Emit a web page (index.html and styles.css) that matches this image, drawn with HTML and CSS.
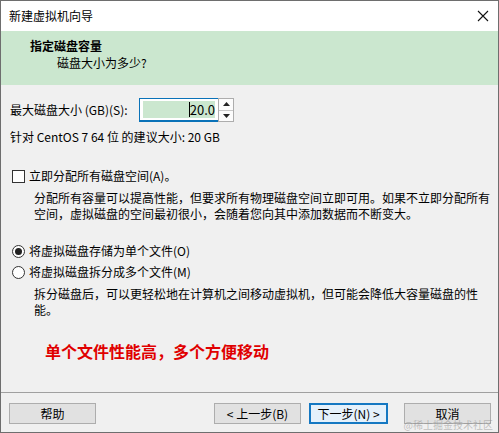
FILE: index.html
```html
<!DOCTYPE html>
<html lang="zh-CN">
<head>
<meta charset="utf-8">
<title>新建虚拟机向导</title>
<link rel="stylesheet" href="styles.css">
</head>
<body>
<div class="window">
  <div class="titlebar">
    <span class="title">新建虚拟机向导</span>
    <svg class="close" width="12" height="12" viewBox="0 0 12 12"><path d="M1 1 L11 11 M11 1 L1 11" stroke="#111" stroke-width="1.1" fill="none"/></svg>
  </div>
  <div class="header">
    <div class="h-title">指定磁盘容量</div>
    <div class="h-sub">磁盘大小为多少?</div>
  </div>
  <div class="content">
    <div class="size-row">
      <span class="label">最大磁盘大小 (GB)(S):</span>
      <div class="spin">
        <div class="spin-input"><span class="caret"></span>20.0</div>
        <div class="spin-btns">
          <div class="spin-btn"><svg width="7" height="4" viewBox="0 0 7 4"><path d="M0 4 L3.5 0 L7 4 Z" fill="#222"/></svg></div>
          <div class="spin-btn"><svg width="7" height="4" viewBox="0 0 7 4"><path d="M0 0 L3.5 4 L7 0 Z" fill="#222"/></svg></div>
        </div>
      </div>
    </div>
    <div class="recommend">针对 CentOS 7 64 位 的建议大小: 20 GB</div>
    <div class="check-row"><span class="checkbox"></span><span>立即分配所有磁盘空间(A)。</span></div>
    <p class="desc">分配所有容量可以提高性能，但要求所有物理磁盘空间立即可用。如果不立即分配所有空间，虚拟磁盘的空间最初很小，会随着您向其中添加数据而不断变大。</p>
    <div class="radio-row first"><span class="radio checked"></span><span>将虚拟磁盘存储为单个文件(O)</span></div>
    <div class="radio-row second"><span class="radio"></span><span>将虚拟磁盘拆分成多个文件(M)</span></div>
    <p class="desc">拆分磁盘后，可以更轻松地在计算机之间移动虚拟机，但可能会降低大容量磁盘的性能。</p>
    <div class="note">单个文件性能高，多个方便移动</div>
  </div>
  <div class="footer">
    <button class="btn help">帮助</button>
    <div class="nav">
      <button class="btn">&lt; 上一步(B)</button>
      <button class="btn focused">下一步(N) &gt;</button>
      <button class="btn cancel">取消</button>
    </div>
    <span class="watermark">@稀土掘金技术社区</span>
  </div>
</div>
</body>
</html>
```
FILE: styles.css
```css
* { box-sizing: border-box; }
html, body { margin: 0; padding: 0; }
body {
  font-family: "Noto Sans CJK SC", "Noto Sans", sans-serif;
  font-size: 12px;
  color: #000;
  background: #fff;
}
.window {
  width: 499px;
  height: 433px;
  border: 1px solid #6e6e6e;
  background: #f0f0f0;
  display: flex;
  flex-direction: column;
}
.titlebar {
  height: 30px;
  background: #fff;
  display: flex;
  align-items: center;
  justify-content: space-between;
  padding: 0 9px 0 8px;
}
.title { font-size: 12px; line-height: 16px; }
.header {
  height: 54px;
  background: #cbe7cf;
  padding: 7px 0 0 29px;
}
.h-title { font-weight: bold; font-size: 12px; line-height: 16px; }
.h-sub { padding-left: 27px; line-height: 16px; margin-top: 1px; }
.content {
  flex: 1;
  padding: 13px 0 0 9px;
}
.size-row {
  display: flex;
  align-items: center;
  height: 24px;
}
.label { width: 129px; line-height: 16px; }
.spin { display: flex; height: 24px; }
.spin-input {
  width: 79px;
  height: 24px;
  border: 1px solid #0a72b8;
  border-width: 1px 0 2px 1px;
  padding: 2px 3px;
  display: flex;
  align-items: center;
  justify-content: flex-end;
  background: linear-gradient(#cbe7cf, #cbe7cf) content-box, #fff;
  line-height: 16px;
  font-size: 13px;
}
.caret { display: inline-block; width: 1px; height: 15px; background: #000; }
.spin-btns {
  width: 16px;
  height: 24px;
  border: 1px solid #adadad;
  display: flex;
  flex-direction: column;
  background: #fcfcfc;
}
.spin-btn {
  flex: 1;
  display: flex;
  align-items: center;
  justify-content: center;
}
.spin-btn + .spin-btn { border-top: 1px solid #c8c8c8; }
.recommend { margin-top: 7px; line-height: 16px; }
.check-row, .radio-row {
  display: flex;
  align-items: center;
  line-height: 16px;
  gap: 4px;
  padding-left: 2px;
}
.check-row { margin-top: 23px; }
.checkbox {
  width: 13px; height: 13px;
  border: 1px solid #333;
  background: #fff;
}
.desc {
  margin: 6px 0 0 24px;
  width: 462px;
  line-height: 16px;
}
.radio-row.first { margin-top: 21px; }
.radio-row.second { margin-top: 5px; }
.radio {
  width: 13px; height: 13px;
  border: 1px solid #333;
  border-radius: 50%;
  background: #fff;
  display: flex;
  align-items: center;
  justify-content: center;
}
.radio.checked::after {
  content: "";
  width: 7px; height: 7px;
  border-radius: 50%;
  background: #222;
}
.note {
  margin: 23px 0 0 35px;
  color: #e00000;
  font-weight: bold;
  font-size: 16px;
  line-height: 20px;
}
.footer {
  position: relative;
  height: 40px;
  border-top: 1px solid #a0a0a0;
  display: flex;
  align-items: flex-start;
  justify-content: space-between;
  padding: 10px 7px 0 8px;
}
.nav { display: flex; gap: 8px; }
.btn {
  font-family: inherit;
  font-size: 12px;
  width: 87px;
  height: 21px;
  padding: 0;
  background: #e1e1e1;
  border: 1px solid #adadad;
  color: #000;
  line-height: 16px;
}
.btn.focused {
  width: 79px;
  border: 2px solid #1578c2;
  background: #e5f1fb;
}
.btn.cancel { margin-left: 8px; }
.watermark {
  position: absolute;
  right: 5px;
  top: 26px;
  font-family: "Noto Sans CJK SC", serif;
  font-size: 10px;
  line-height: 11px;
  color: rgba(140, 140, 140, 0.5);
}
```
